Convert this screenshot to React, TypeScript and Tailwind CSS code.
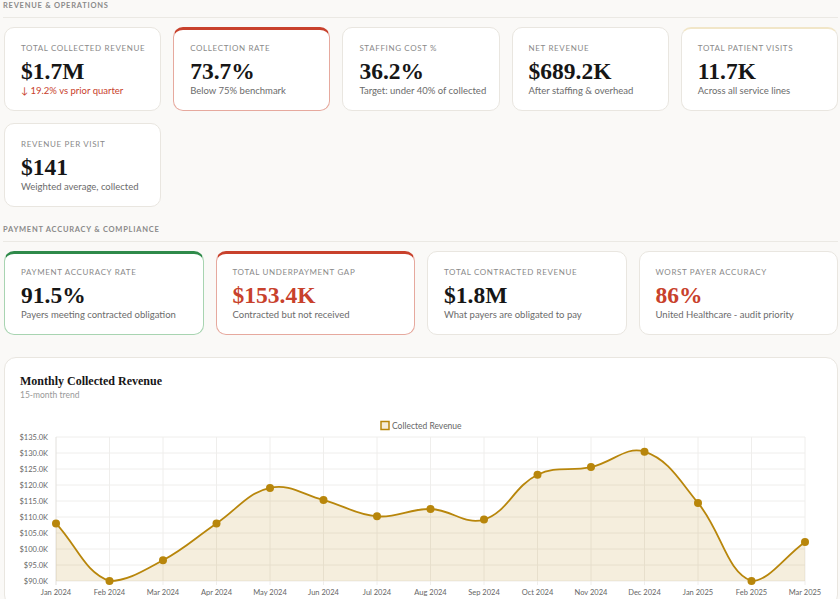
import React from "react";

type Variant = "red" | "green" | "gold" | "none";

function Card({
  label,
  value,
  sub,
  subRed,
  valueRed,
  variant = "none",
}: {
  label: string;
  value: string;
  sub: string;
  subRed?: boolean;
  valueRed?: boolean;
  variant?: Variant;
}) {
  const border =
    variant === "red"
      ? "border border-[#e6a99e] border-t-[3px] border-t-[#c8412c] pt-[12px]"
      : variant === "green"
      ? "border border-[#a8d4b1] border-t-[3px] border-t-[#2f8a4a] pt-[12px]"
      : variant === "gold"
      ? "border border-[#e9e6e0] border-t-[2px] border-t-[#f1e6c8] pt-[13px]"
      : "border border-[#e9e6e0] pt-[14px]";
  return (
    <div className={`bg-white rounded-[10px] h-[84px] px-4 ${border}`}>
      <div className="text-[8px] leading-[12px] tracking-[0.08em] text-[#8a8a8a] uppercase whitespace-nowrap">
        {label}
      </div>
      <div
        className={`mt-[4px] text-[23.5px] leading-[26px] font-bold [font-family:'Liberation_Serif',serif] ${
          valueRed ? "text-[#c8412c]" : "text-[#161616]"
        }`}
      >
        {value}
      </div>
      <div
        className={`text-[9.5px] leading-[14px] whitespace-nowrap ${
          subRed ? "text-[#c8412c]" : "text-[#6b6b6b]"
        }`}
      >
        {sub}
      </div>
    </div>
  );
}

function SectionHeader({ children }: { children: React.ReactNode }) {
  return (
    <div className="text-[7.5px] leading-[12px] font-bold tracking-[0.1em] text-[#8a8a8a] uppercase pb-[5px] border-b border-[#ebe9e4] -ml-[1px] mb-[9px]">
      {children}
    </div>
  );
}

const months = [
  "Jan 2024",
  "Feb 2024",
  "Mar 2024",
  "Apr 2024",
  "May 2024",
  "Jun 2024",
  "Jul 2024",
  "Aug 2024",
  "Sep 2024",
  "Oct 2024",
  "Nov 2024",
  "Dec 2024",
  "Jan 2025",
  "Feb 2025",
  "Mar 2025",
];
const values = [
  108.0, 90, 96.5, 108, 119.1, 115.3, 110.2, 112.5, 109.2, 123.2, 125.6,
  130.4, 114.4, 90, 102.2,
];

function Chart() {
  const left = 51;
  const step = 53.5;
  const top = 21;
  const bottom = 165;
  const right = left + step * 14;
  const yOf = (v: number) => top + ((135 - v) / 45) * (bottom - top);
  const pts = values.map((v, i) => ({ x: left + i * step, y: yOf(v) }));
  const t = 0.4;
  const clampY = (y: number) => Math.max(top, Math.min(bottom, y));
  const clampX = (x: number) => Math.max(left, Math.min(right, x));
  const cps = pts.map((cur, i) => {
    const prev = i === 0 ? cur : pts[i - 1];
    const next = i === pts.length - 1 ? cur : pts[i + 1];
    const d01 = Math.hypot(cur.x - prev.x, cur.y - prev.y);
    const d12 = Math.hypot(next.x - cur.x, next.y - cur.y);
    let s01 = d01 / (d01 + d12);
    let s12 = d12 / (d01 + d12);
    if (isNaN(s01)) s01 = 0;
    if (isNaN(s12)) s12 = 0;
    const fa = t * s01;
    const fb = t * s12;
    return {
      p: {
        x: clampX(cur.x - fa * (next.x - prev.x)),
        y: clampY(cur.y - fa * (next.y - prev.y)),
      },
      n: {
        x: clampX(cur.x + fb * (next.x - prev.x)),
        y: clampY(cur.y + fb * (next.y - prev.y)),
      },
    };
  });
  let d = `M${pts[0].x},${pts[0].y}`;
  for (let i = 1; i < pts.length; i++) {
    d += ` C${cps[i - 1].n.x},${cps[i - 1].n.y} ${cps[i].p.x},${cps[i].p.y} ${pts[i].x},${pts[i].y}`;
  }
  const fillD = `${d} L${right},${bottom} L${left},${bottom} Z`;
  const yTicks = [135, 130, 125, 120, 115, 110, 105, 100, 95, 90];

  return (
    <svg width={832} height={190} className="block">
      <rect
        x={376}
        y={5.5}
        width={8}
        height={8}
        fill="#f5ecd8"
        stroke="#b8860b"
        strokeWidth={1.5}
      />
      <text x={387} y={12.5} fontSize={8.5} fill="#666">
        Collected Revenue
      </text>
      {yTicks.map((v) => (
        <line
          key={v}
          x1={left}
          x2={right}
          y1={yOf(v)}
          y2={yOf(v)}
          stroke="#efeeec"
          strokeWidth={1}
        />
      ))}
      {pts.map((p, i) => (
        <line
          key={i}
          x1={p.x}
          x2={p.x}
          y1={top}
          y2={bottom + 4}
          stroke={i === 0 ? "#e2e0dc" : "#efeeec"}
          strokeWidth={1}
        />
      ))}
      <path d={fillD} fill="rgba(184,134,11,0.14)" />
      <path d={d} fill="none" stroke="#b8860b" strokeWidth={1.8} />
      {pts.map((p, i) => (
        <circle key={i} cx={p.x} cy={p.y} r={4} fill="#b8860b" />
      ))}
      {yTicks.map((v) => (
        <text
          key={v}
          x={left - 8}
          y={yOf(v) + 3}
          fontSize={7.5}
          fill="#666"
          textAnchor="end"
        >
          ${v.toFixed(1)}K
        </text>
      ))}
      {months.map((m, i) => (
        <text
          key={m}
          x={left + i * step}
          y={179}
          fontSize={7.5}
          fill="#666"
          textAnchor="middle"
        >
          {m}
        </text>
      ))}
    </svg>
  );
}

export default function App() {
  return (
    <div className="w-[840px] h-[599px] overflow-hidden bg-[#faf9f7] pl-[4px] pr-[2px] [font-family:Lato,'Noto_Sans',sans-serif]">
      <SectionHeader>Revenue &amp; Operations</SectionHeader>
      <div className="grid grid-cols-5 gap-3">
        <Card
          label="Total Collected Revenue"
          value="$1.7M"
          sub="↓ 19.2% vs prior quarter"
          subRed
        />
        <Card
          label="Collection Rate"
          value="73.7%"
          sub="Below 75% benchmark"
          variant="red"
        />
        <Card
          label="Staffing Cost %"
          value="36.2%"
          sub="Target: under 40% of collected"
        />
        <Card
          label="Net Revenue"
          value="$689.2K"
          sub="After staffing & overhead"
        />
        <Card
          label="Total Patient Visits"
          value="11.7K"
          sub="Across all service lines"
          variant="gold"
        />
        <Card
          label="Revenue Per Visit"
          value="$141"
          sub="Weighted average, collected"
        />
      </div>

      <div className="mt-[17px]">
        <SectionHeader>Payment Accuracy &amp; Compliance</SectionHeader>
      </div>
      <div className="grid grid-cols-4 gap-3">
        <Card
          label="Payment Accuracy Rate"
          value="91.5%"
          sub="Payers meeting contracted obligation"
          variant="green"
        />
        <Card
          label="Total Underpayment Gap"
          value="$153.4K"
          sub="Contracted but not received"
          valueRed
          variant="red"
        />
        <Card
          label="Total Contracted Revenue"
          value="$1.8M"
          sub="What payers are obligated to pay"
        />
        <Card
          label="Worst Payer Accuracy"
          value="86%"
          sub="United Healthcare - audit priority"
          valueRed
        />
      </div>

      <div className="mt-[22px] bg-white border border-[#e9e6e0] rounded-[12px]">
        <div className="px-[15px] pt-[15px]">
          <div className="text-[12px] leading-[16px] font-bold text-[#161616] [font-family:'Liberation_Serif',serif]">
            Monthly Collected Revenue
          </div>
          <div className="text-[8.5px] leading-[12px] text-[#999]">
            15-month trend
          </div>
        </div>
        <div className="mt-[15px]">
          <Chart />
        </div>
      </div>
    </div>
  );
}
